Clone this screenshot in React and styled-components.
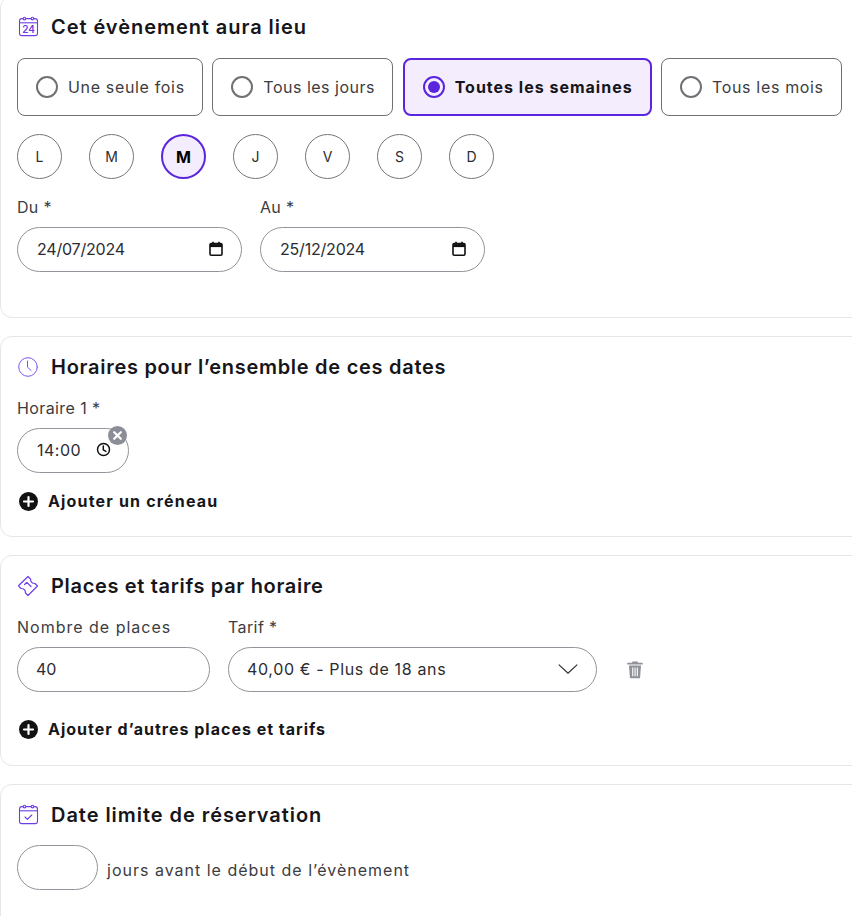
import React from "react";
import styled, { createGlobalStyle } from "styled-components";

const GlobalStyle = createGlobalStyle`
  html, body {
    margin: 0;
    padding: 0;
    background: #fff;
    overflow: hidden;
  }
  body {
    font-family: Inter, "Noto Sans", "Liberation Sans", sans-serif;
    color: #1a1a1c;
  }
`;

const Page = styled.div`
  width: 852px;
  height: 916px;
  overflow: hidden;
  display: flex;
  flex-direction: column;
  gap: 18px;
`;

const Card = styled.section`
  box-sizing: border-box;
  width: 900px;
  height: ${(p) => p.$height}px;
  margin-top: ${(p) => p.$offset || 0}px;
  flex: none;
  padding: 18px 16px 0;
  border: 1px solid #e6e6e8;
  border-radius: 12px;
`;

const Heading = styled.div`
  display: flex;
  align-items: center;
  height: 24px;
  gap: 12px;
  margin-bottom: ${(p) => p.$gap || 20}px;
  svg {
    flex: none;
  }
`;

const Title = styled.h2`
  margin: 0;
  font-size: 20px;
  font-weight: 600;
  letter-spacing: ${(p) => p.$spacing}px;
  color: #16161a;
`;

const RadioRow = styled.div`
  display: grid;
  grid-template-columns: 186px 181px 249px 181px;
  column-gap: 9.33px;
  margin-top: -1px;
`;

const RadioCard = styled.div`
  box-sizing: border-box;
  height: 58px;
  display: flex;
  align-items: center;
  gap: 10px;
  padding-left: 18px;
  border-radius: 8px;
  white-space: nowrap;
  font-size: 16px;
  letter-spacing: ${(p) => p.$spacing}px;
  border: ${(p) => (p.$active ? "2px solid #5b25dd" : "1px solid #6f6f74")};
  background: ${(p) => (p.$active ? "#f3edfd" : "#fff")};
  color: ${(p) => (p.$active ? "#16161a" : "#3c3c42")};
  font-weight: ${(p) => (p.$active ? 700 : 400)};
`;

const RadioDot = styled.span`
  box-sizing: border-box;
  width: 22px;
  height: 22px;
  flex: none;
  border-radius: 50%;
  display: flex;
  align-items: center;
  justify-content: center;
  border: 2.5px solid ${(p) => (p.$active ? "#5b25dd" : "#707076")};
  &::after {
    content: "";
    display: ${(p) => (p.$active ? "block" : "none")};
    width: 12px;
    height: 12px;
    border-radius: 50%;
    background: #5b25dd;
  }
`;

const DayRow = styled.div`
  display: flex;
  gap: 27px;
  margin-top: 18px;
`;

const Day = styled.div`
  box-sizing: border-box;
  width: 45px;
  height: 45px;
  border-radius: 50%;
  display: flex;
  align-items: center;
  justify-content: center;
  font-size: ${(p) => (p.$active ? 16 : 14)}px;
  font-weight: ${(p) => (p.$active ? 700 : 400)};
  border: ${(p) => (p.$active ? "2px solid #5b25dd" : "1px solid #77777c")};
  background: ${(p) => (p.$active ? "#f3edfd" : "#fff")};
  color: ${(p) => (p.$active ? "#000" : "#2c2c32")};
`;

const FieldRow = styled.div`
  display: flex;
  align-items: flex-start;
  gap: ${(p) => p.$gap || 18}px;
  margin-top: ${(p) => p.$top || 0}px;
`;

const Field = styled.div`
  display: flex;
  flex-direction: column;
  gap: 9px;
`;

const Label = styled.div`
  height: 20px;
  line-height: 18px;
  font-size: 16px;
  letter-spacing: ${(p) => p.$spacing || 0.8}px;
  color: #3c3c42;
`;

const Input = styled.div`
  position: relative;
  box-sizing: border-box;
  width: ${(p) => p.$w}px;
  height: 45px;
  display: flex;
  align-items: center;
  justify-content: space-between;
  padding: 0 ${(p) => p.$right || 17}px 2px ${(p) => p.$left || 19}px;
  border: 1px solid #93939b;
  border-radius: 23px;
  font-size: 16px;
  letter-spacing: ${(p) => p.$spacing || 0}px;
  color: #2c2c32;
`;

const RemoveBadge = styled.span`
  position: absolute;
  top: -3px;
  right: 1px;
  width: 19px;
  height: 19px;
  line-height: 0;
`;

const AddRow = styled.div`
  display: flex;
  align-items: center;
  gap: 10px;
  margin-left: 2px;
  margin-top: ${(p) => p.$top}px;
  height: 20px;
  font-size: 16px;
  font-weight: 700;
  letter-spacing: ${(p) => p.$spacing}px;
  color: #16161a;
`;

const Trash = styled.span`
  display: flex;
  align-items: center;
  height: 45px;
  margin-left: 12px;
`;

const LimitRow = styled.div`
  display: flex;
  align-items: center;
  gap: 9px;
  font-size: 16px;
  letter-spacing: 1px;
  color: #3c3c42;
`;

const LimitText = styled.span`
  padding-top: 4px;
`;

const PURPLE = "#6d3ee6";

const CalendarIcon = ({ children }) => (
  <svg width="22" height="22" viewBox="0 0 22 22" fill="none" stroke={PURPLE} strokeWidth="1.1">
    <rect x="2.5" y="2.6" width="18" height="17" rx="2.4" />
    <path d="M2.5 6.8h18" />
    <circle cx="7.5" cy="2.6" r="1.3" fill="#fff" />
    <circle cx="15.5" cy="2.6" r="1.3" fill="#fff" />
    {children}
  </svg>
);

const ClockIcon = () => (
  <svg width="22" height="22" viewBox="0 0 22 22" fill="none" stroke="#7d55ec" strokeWidth="1" strokeLinecap="round">
    <circle cx="11" cy="11" r="9.3" />
    <path d="M10.5 5v6.2l3.6 3.2" />
  </svg>
);

const TicketIcon = () => (
  <svg width="22" height="22" viewBox="0 0 22 22" fill="none" stroke={PURPLE} strokeWidth="1.2" strokeLinejoin="round" strokeLinecap="round">
    <path d="M1.5 10.8L11 1.5l2.5 2.5Q13.5 8.5 18 8.5l2.5 2.5-9.5 9.5-2.5-2.5Q8.5 13.5 4 13.5z" />
    <path d="M7.6 9.5l2.2-2.2 4.2 4.2" />
  </svg>
);

const DateIcon = () => (
  <svg width="16" height="16" viewBox="0 0 16 16" fill="none" stroke="#111" strokeWidth="1.6">
    <rect x="2" y="2.6" width="12" height="11.6" rx="1.2" />
    <path d="M2 4.6h12" strokeWidth="3" />
    <path d="M5 .8v2.4M11 .8v2.4" />
  </svg>
);

const TimeIcon = () => (
  <svg width="15" height="15" viewBox="0 0 15 15" fill="none" stroke="#111" strokeWidth="1.5" strokeLinecap="round">
    <circle cx="7.5" cy="7.5" r="6" />
    <path d="M7.3 4v3.8l2.6 1.5" />
  </svg>
);

const PlusIcon = () => (
  <svg width="19" height="19" viewBox="0 0 19 19">
    <circle cx="9.5" cy="9.5" r="9.5" fill="#111" />
    <path d="M9.5 5v9M5 9.5h9" stroke="#fff" strokeWidth="2.2" strokeLinecap="round" />
  </svg>
);

const RemoveIcon = () => (
  <svg width="19" height="19" viewBox="0 0 19 19">
    <circle cx="9.5" cy="9.5" r="9.5" fill="#8b8e97" />
    <path d="M6.2 6.2l6.6 6.6M12.8 6.2l-6.6 6.6" stroke="#fff" strokeWidth="2.2" strokeLinecap="round" />
  </svg>
);

const ChevronIcon = () => (
  <svg width="20" height="10" viewBox="0 0 20 10" fill="none" stroke="#26262a" strokeWidth="1.1">
    <path d="M.8 .6l9.2 8.6 9.2-8.6" />
  </svg>
);

const TrashIcon = () => (
  <svg width="16" height="19" viewBox="0 0 16 19">
    <path d="M5.5 1.6h5l.6 1.2H15a.8.8 0 010 1.8H1a.8.8 0 010-1.8h3.9z" fill="#8f9299" />
    <path
      fillRule="evenodd"
      d="M2 5.6h12l-.9 11.8c0 .5-.5.9-1 .9H3.9c-.5 0-1-.4-1-.9zM5.2 7.6v8.6h1.1V7.6zM7.5 7.6v8.6h1.1V7.6zM9.8 7.6v8.6h1.1V7.6z"
      fill="#8f9299"
    />
  </svg>
);

const FREQUENCIES = [
  { label: "Une seule fois", spacing: 0.66 },
  { label: "Tous les jours", spacing: 0.5 },
  { label: "Toutes les semaines", spacing: 1, active: true },
  { label: "Tous les mois", spacing: 0.66 },
];

const DAYS = [
  { label: "L" },
  { label: "M" },
  { label: "M", active: true },
  { label: "J" },
  { label: "V" },
  { label: "S" },
  { label: "D" },
];

export default function App() {
  return (
    <Page>
      <GlobalStyle />
      <Card $height={322} $offset={-4}>
        <Heading>
          <CalendarIcon>
            <text x="11.5" y="17.4" fontSize="10" fontWeight="600" fontFamily="Inter, sans-serif" textAnchor="middle" fill={PURPLE} stroke="none">
              24
            </text>
          </CalendarIcon>
          <Title $spacing={0.95}>Cet évènement aura lieu</Title>
        </Heading>
        <RadioRow>
          {FREQUENCIES.map((f) => (
            <RadioCard key={f.label} $active={f.active} $spacing={f.spacing}>
              <RadioDot $active={f.active} />
              {f.label}
            </RadioCard>
          ))}
        </RadioRow>
        <DayRow>
          {DAYS.map((d, i) => (
            <Day key={i} $active={d.active}>
              {d.label}
            </Day>
          ))}
        </DayRow>
        <FieldRow $top={19}>
          <Field>
            <Label $spacing={0.3}>Du *</Label>
            <Input $w={225} $spacing={-0.2}>
              24/07/2024
              <DateIcon />
            </Input>
          </Field>
          <Field>
            <Label $spacing={0.3}>Au *</Label>
            <Input $w={225} $spacing={-0.2}>
              25/12/2024
              <DateIcon />
            </Input>
          </Field>
        </FieldRow>
      </Card>

      <Card $height={201}>
        <Heading>
          <ClockIcon />
          <Title $spacing={0.72}>Horaires pour l’ensemble de ces dates</Title>
        </Heading>
        <Field>
          <Label $spacing={0.4}>Horaire 1 *</Label>
          <Input $w={112} $spacing={0.5}>
            14:00
            <TimeIcon />
            <RemoveBadge>
              <RemoveIcon />
            </RemoveBadge>
          </Input>
        </Field>
        <AddRow $top={18} $spacing={1.17}>
          <PlusIcon />
          Ajouter un créneau
        </AddRow>
      </Card>

      <Card $height={211}>
        <Heading>
          <TicketIcon />
          <Title $spacing={0.67}>Places et tarifs par horaire</Title>
        </Heading>
        <FieldRow>
          <Field>
            <Label $spacing={1}>Nombre de places</Label>
            <Input $w={193} $left={18}>40</Input>
          </Field>
          <Field>
            <Label $spacing={0.4}>Tarif *</Label>
            <Input $w={369} $right={18} $left={18} $spacing={0.64}>
              40,00 € - Plus de 18 ans
              <ChevronIcon />
            </Input>
          </Field>
          <Field>
            <Label />
            <Trash>
              <TrashIcon />
            </Trash>
          </Field>
        </FieldRow>
        <AddRow $top={27} $spacing={1}>
          <PlusIcon />
          Ajouter d’autres places et tarifs
        </AddRow>
      </Card>

      <Card $height={200}>
        <Heading $gap={18}>
          <CalendarIcon>
            <path d="M8 13l2.4 2.4 4.4-4.4" strokeLinecap="round" strokeLinejoin="round" />
          </CalendarIcon>
          <Title $spacing={0.95}>Date limite de réservation</Title>
        </Heading>
        <LimitRow>
          <Input $w={81} />
          <LimitText>jours avant le début de l’évènement</LimitText>
        </LimitRow>
      </Card>
    </Page>
  );
}
